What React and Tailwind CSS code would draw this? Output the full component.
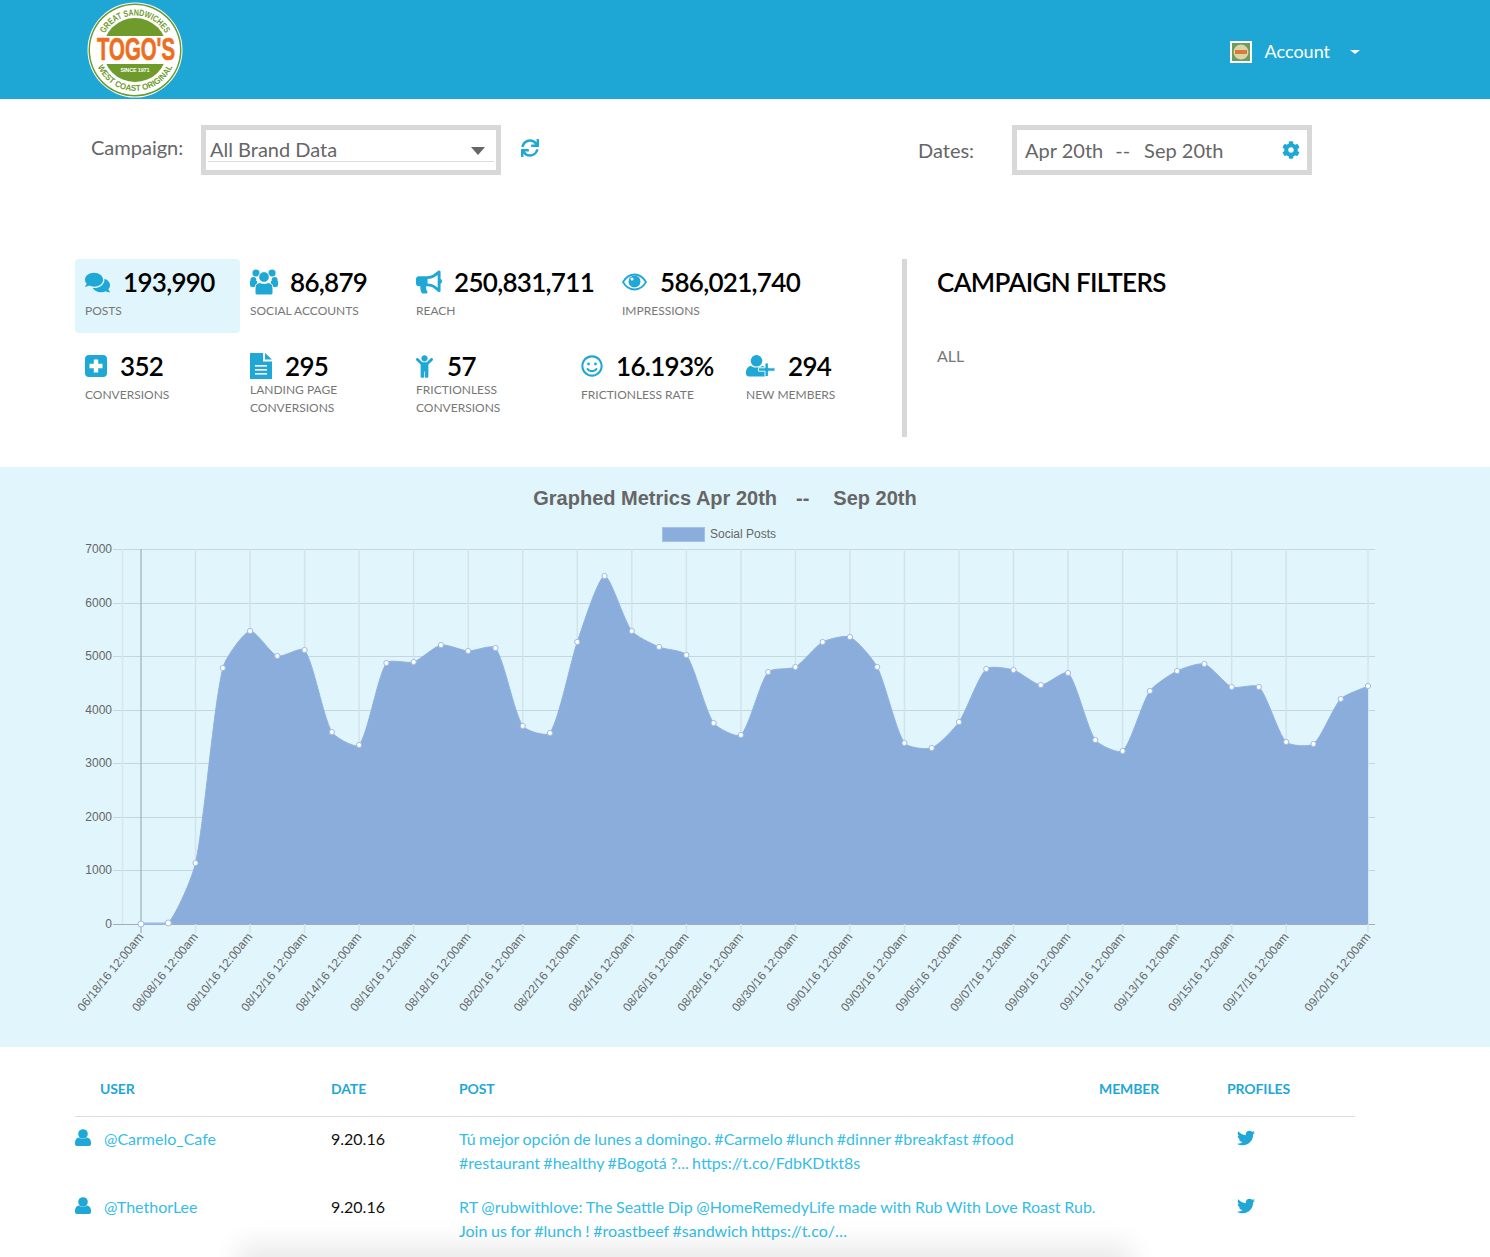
import React from "react";
import { FaComments, FaBullhorn, FaChild, FaRegSmile, FaSync, FaCog, FaTwitter } from "react-icons/fa";

const ys = [924,923,863,668,631,656,650,732,745,663,662,645,651,648,726,733,642,576,631,647,655,723,735,672,667,642,637,667,743,748,722,669,670,685,673,740,751,691,671,664,687,687,742,744,699,686];
const xAt = (i) => 141 + (i * (1368 - 141)) / 45;
const pts = ys.map((y, i) => [xAt(i) - 60, y - 530]);
const base = 924 - 530;

function curve() {
  const t = 0.22;
  const c = pts.map((p, i) => {
    const a = pts[Math.max(i - 1, 0)], b = pts[Math.min(i + 1, pts.length - 1)];
    const d1 = Math.hypot(p[0] - a[0], p[1] - a[1]), d2 = Math.hypot(b[0] - p[0], b[1] - p[1]);
    const s = d1 + d2 || 1;
    const fa = (t * d1) / s, fb = (t * d2) / s;
    return {
      p: [p[0] - fa * (b[0] - a[0]), Math.min(base, p[1] - fa * (b[1] - a[1]))],
      n: [p[0] + fb * (b[0] - a[0]), Math.min(base, p[1] + fb * (b[1] - a[1]))],
    };
  });
  let d = `M${pts[0][0]} ${pts[0][1]}`;
  for (let i = 1; i < pts.length; i++) d += `C${c[i - 1].n[0]} ${c[i - 1].n[1]} ${c[i].p[0]} ${c[i].p[1]} ${pts[i][0]} ${pts[i][1]}`;
  return d;
}

const labels = ["06/18/16","08/08/16","08/10/16","08/12/16","08/14/16","08/16/16","08/18/16","08/20/16","08/22/16","08/24/16","08/26/16","08/28/16","08/30/16","09/01/16","09/03/16","09/05/16","09/07/16","09/09/16","09/11/16","09/13/16","09/15/16","09/17/16","09/20/16"];

function Chart() {
  const line = curve();
  const hLines = [0,1,2,3,4,5,6,7];
  return (
    <svg width="1340" height="490" viewBox="0 0 1340 490" className="block" style={{ fontFamily: "'Liberation Sans', sans-serif" }}>
      {hLines.map((n) => {
        const y = Math.round(base - (n * 375) / 7) + 0.5;
        return (
          <g key={n}>
            <line x1="53" x2="1315" y1={y} y2={y} stroke={n === 0 ? "#a3aeb2" : "#c4d7de"} />
            <text x="52" y={y + 3} textAnchor="end" fontSize="12" fill="#666">{n === 0 ? "0" : n * 1000}</text>
          </g>
        );
      })}
      <line x1="62.5" x2="62.5" y1="19" y2={base} stroke="#d6e7ed" strokeWidth="1.5" />
      {labels.map((l, i) => {
        const xx = i === 22 ? 1308 : xAt(i * 2) - 60;
        return (
          <g key={i}>
            <line x1={xx} x2={xx} y1="19" y2={base + 9} stroke={i === 0 ? "#a9bdc5" : "#d2e4ea"} strokeWidth="1.5" />
            <text transform={`translate(${xx + 3} ${base + 13}) rotate(-51)`} textAnchor="end" fontSize="12" fill="#666">{l} 12:00am</text>
          </g>
        );
      })}
      <path d={`${line}L${pts[pts.length - 1][0]} ${base}L${pts[0][0]} ${base}Z`} fill="#8aaddc" />
      <path d={line} fill="none" stroke="#8fb1e0" strokeWidth="1" />
      <line x1={pts[0][0]} x2={pts[1][0]} y1={base - 0.5} y2={base - 0.5} stroke="#9dbbe8" strokeWidth="2" />
      {pts.map((p, i) => (
        <circle key={i} cx={p[0]} cy={p[1]} r={i < 2 ? 3 : 2.6} fill="#fff" stroke="#9dbbe8" strokeWidth="1" />
      ))}
    </svg>
  );
}

function Logo() {
  return (
    <svg width="96" height="96" viewBox="0 0 96 96" className="block" style={{ fontFamily: "'Liberation Sans', sans-serif" }}>
      <defs>
        <path id="logoTop" d="M13.5 48a34.5 34.5 0 0 1 69 0" />
        <path id="logoBottom" d="M7 48a41 41 0 0 0 82 0" />
      </defs>
      <circle cx="48" cy="48" r="47.5" fill="#fff" />
      <circle cx="48" cy="48" r="46.5" fill="#6b9a2e" />
      <circle cx="48" cy="48" r="45" fill="#fff" />
      <circle cx="48" cy="48" r="32" fill="#6f9b2c" />
      <text fontSize="9" fontWeight="700" fill="#6f9b2c"><textPath href="#logoTop" startOffset="50%" textAnchor="middle" textLength="74" lengthAdjust="spacingAndGlyphs">GREAT SANDWICHES</textPath></text>
      <text fontSize="8.5" fontWeight="700" fill="#6f9b2c"><textPath href="#logoBottom" startOffset="50%" textAnchor="middle" textLength="94" lengthAdjust="spacingAndGlyphs">WEST COAST ORIGINAL</textPath></text>
      <rect x="7" y="34" width="82" height="28" fill="#fff" />
      <text x="49" y="58" textAnchor="middle" fontSize="32" fontWeight="700" fill="#ec6f1f" stroke="#ec6f1f" strokeWidth="0.7" textLength="78" lengthAdjust="spacingAndGlyphs">TOGO'S</text>
      <text x="48" y="70" textAnchor="middle" fontSize="5.5" fontWeight="700" fill="#fff" textLength="29" lengthAdjust="spacing">SINCE 1971</text>
    </svg>
  );
}

const IconUsers = () => (
  <svg width="28" height="26" viewBox="0 0 28 26" fill="currentColor">
    <circle cx="6" cy="4" r="3.6" /><circle cx="22" cy="4" r="3.6" />
    <circle cx="3.4" cy="11" r="3" /><circle cx="24.6" cy="11" r="3" />
    <circle cx="14" cy="8" r="5.4" stroke="#fff" strokeWidth="1" />
    <path d="M0 12h7v6H2a2 2 0 0 1-2-2zM28 12h-7v6h5a2 2 0 0 0 2-2z" />
    <path d="M5 19c0-3.6 2.6-5.4 5-5.4 1.2 1 6.800 1 8 0 2.400 0 5 1.800 5 5.400v4.500c0 1.400-1 2.500-2.500 2.500h-13c-1.500 0-2.500-1.100-2.500-2.500z" stroke="#fff" strokeWidth="1" />
  </svg>
);
const IconEye = () => (
  <svg width="25" height="18" viewBox="0 0 25 18">
    <path d="M1 9c2.800-4.700 6.800-7.500 11.500-7.500S21.200 4.300 24 9c-2.800 4.700-6.800 7.500-11.500 7.500S3.800 13.700 1 9z" fill="none" stroke="currentColor" strokeWidth="1.800" />
    <circle cx="12.500" cy="8.500" r="6" fill="currentColor" />
    <circle cx="10" cy="6" r="1.500" fill="#fff" />
  </svg>
);
const IconPlus = () => (
  <svg width="22" height="22" viewBox="0 0 22 22">
    <rect width="22" height="22" rx="4" fill="currentColor" />
    <path d="M8.800 4.500h4.400v4.300h4.300v4.400h-4.300v4.300H8.800v-4.300H4.500V8.800h4.300z" fill="#fff" />
  </svg>
);
const IconFile = () => (
  <svg width="22" height="26" viewBox="0 0 22 26" fill="currentColor">
    <path d="M0 0h13v8.500h9V26H0z" />
    <path d="M15 0l7 6.500h-7z" />
    <rect x="5" y="12" width="12" height="1.600" fill="#fff" /><rect x="5" y="16" width="12" height="1.600" fill="#fff" /><rect x="5" y="20" width="12" height="1.600" fill="#fff" />
  </svg>
);
const IconUserPlus = () => (
  <svg width="29" height="22" viewBox="0 0 29 22">
    <circle cx="10.500" cy="5.800" r="5.800" fill="currentColor" />
    <path d="M0 17.500c0-4 2.600-6.500 5-6.500 2.500 2 8.500 2 11 0 2 0 4 1.500 4.500 4V21.500H3c-1.800 0-3-1.200-3-3z" fill="currentColor" />
    <path d="M19 8h3.400v4.800H29v3.400h-6.600V21.500H19v-5.300h-6.500v-3.400H19z" fill="currentColor" stroke="#fff" strokeWidth="0.9" />
  </svg>
);
const IconUser = () => (
  <svg width="16" height="17" viewBox="0 0 16 17" fill="currentColor">
    <circle cx="8" cy="5" r="4.800" />
    <path d="M0 13.500C0 10.500 2 9 3.800 8.600c2 1.800 6.400 1.800 8.400 0C14 9 16 10.500 16 13.500V15c0 1.200-.8 2-2 2H2c-1.200 0-2-.8-2-2z" />
  </svg>
);

function Stat({ icon, value, label, active, className, iconGap = "gap-[9px]", labelClass = "-mt-[3px]" }) {
  return (
    <div className={`pl-[10px] pr-[10px] ${active ? "bg-[#e1f5fc] rounded-[4px]" : ""} ${className}`}>
      <div className={`flex items-center h-[46px] ${iconGap}`}>
        <span className="text-[#1fa8d6] flex items-center">{icon}</span>
        <span className="text-[26px] font-semibold text-black tracking-[-0.7px] leading-none">{value}</span>
      </div>
      <div className={`text-[12px] leading-[18px] text-[#777] uppercase ${labelClass}`}>{label}</div>
    </div>
  );
}

const Row = ({ user, lines, spacing }) => (
  <div className="grid grid-cols-[256px_128px_640px_128px_1fr] text-[16px] leading-[24px] mb-[20px]">
    <div className="flex items-start">
      <span className="text-[#1fa8d6] mt-[2px]"><IconUser /></span>
      <a className="ml-[13px] text-[#35bde6]">{user}</a>
    </div>
    <div className="text-[#111]">9.20.16</div>
    <div className={`text-[#35bde6] whitespace-nowrap ${spacing}`}>{lines[0]}<br />{lines[1]}</div>
    <div />
    <div className="pl-[10px] pt-[2px]"><FaTwitter className="text-[#1fa8d6]" size={18} /></div>
  </div>
);

export default function App() {
  return (
    <div className="relative h-[1257px] overflow-hidden bg-white" style={{ fontFamily: "Lato, sans-serif" }}>
      <header className="h-[99px] bg-[#1ea7d5] flex items-center justify-between pl-[87px] pr-[130px]">
        <Logo />
        <div className="flex items-center mt-[4px] text-white">
          <svg width="22" height="22" viewBox="0 0 22 22" className="block">
            <rect width="22" height="22" fill="#fff" />
            <rect x="2" y="2" width="18" height="18" fill="#6f9b5c" />
            <circle cx="11" cy="11" r="7.500" fill="#d9d6a8" />
            <rect x="5" y="9" width="12" height="4" fill="#dc7a3a" />
          </svg>
          <span className="ml-[13px] mb-[2px] text-[18px] leading-[24px]">Account</span>
          <span className="ml-[20px] w-0 h-0 border-x-[5px] border-x-transparent border-t-[4px] border-t-white" />
        </div>
      </header>

      <div className="h-[160px] flex pt-[26px] pl-[91px] items-start">
        <span className="text-[20px] leading-[44px] text-[#666] w-[110px]">Campaign:</span>
        <div className="w-[300px] h-[50px] border-[5px] border-[#d8d8d8] px-[2px] pt-[2px]">
          <div className="h-[27px] border-b border-[#ddd] flex items-end justify-between pl-[2px] pr-[9px] text-[20px] leading-[26px] text-[#666] mt-[3px]">
            <span className="mb-[-1px]">All Brand Data</span>
            <span className="mb-[6px] w-0 h-0 border-x-[7px] border-x-transparent border-t-[8px] border-t-[#666]" />
          </div>
        </div>
        <FaSync className="text-[#1fa8d6] ml-[20px] mt-[14px]" size={18} />
        <span className="ml-[379px] text-[20px] leading-[50px] text-[#666] w-[94px]">Dates:</span>
        <div className="w-[300px] h-[50px] border-[5px] border-[#d8d8d8] pl-[8px] pr-[7px] flex items-center justify-between text-[20px] text-[#666]">
          <span className="whitespace-nowrap">Apr 20th<span className="ml-[12px]">--</span><span className="ml-[14px]">Sep 20th</span></span>
          <FaCog className="text-[#1fa8d6]" size={18} />
        </div>
      </div>

      <section className="flex pl-[75px] h-[208px]">
        <div className="w-[827px]">
          <div className="flex h-[84px]">
            <Stat active className="w-[165px] h-[74px]" iconGap="gap-[13px]" icon={<FaComments size={25} />} value="193,990" label="Posts" />
            <Stat className="w-[166px]" iconGap="gap-[12px]" icon={<IconUsers />} value="86,879" label="Social Accounts" />
            <Stat className="w-[206px]" iconGap="gap-[12px]" icon={<FaBullhorn size={26} />} value="250,831,711" label="Reach" />
            <Stat className="w-[220px]" iconGap="gap-[13px]" icon={<IconEye />} value="586,021,740" label="Impressions" />
          </div>
          <div className="flex">
            <Stat className="w-[165px]" icon={<IconPlus />} iconGap="gap-[13px]" value="352" label="Conversions" />
            <Stat className="w-[166px]" labelClass="-mt-[8px]" icon={<IconFile />} iconGap="gap-[13px]" value="295" label={<>Landing Page<br />Conversions</>} />
            <Stat className="w-[165px]" labelClass="-mt-[8px]" icon={<FaChild className="w-[17px] h-[23px]" />} iconGap="gap-[14px]" value="57" label={<>Frictionless<br />Conversions</>} />
            <Stat className="w-[165px]" icon={<FaRegSmile size={22} />} iconGap="gap-[13px]" value="16.193%" label="Frictionless Rate" />
            <Stat className="w-[166px]" icon={<IconUserPlus />} iconGap="gap-[13px]" value="294" label="New Members" />
          </div>
        </div>
        <div className="w-[5px] h-[178px] bg-[#d8d8d8]" />
        <div className="pl-[30px]">
          <h2 className="text-[26px] leading-[46px] font-semibold text-black tracking-[-0.65px]">CAMPAIGN FILTERS</h2>
          <p className="mt-[39px] text-[16px] leading-[24px] text-[#777]">ALL</p>
        </div>
      </section>

      <section className="h-[580px] bg-[#e1f5fc] relative">
        <div className="h-[63px] pt-[19px] pr-[40px] text-center text-[20px] leading-[24px] font-bold text-[#666] whitespace-nowrap" style={{ fontFamily: "'Liberation Sans', sans-serif" }}>
          Graphed Metrics Apr 20th<span className="ml-[19px]">--</span><span className="ml-[24px]">Sep 20th</span>
        </div>
        <div className="pl-[60px]"><Chart /></div>
        <div className="absolute left-[662px] top-[58px] flex items-center text-[12px] text-[#666]" style={{ fontFamily: "'Liberation Sans', sans-serif" }}>
          <span className="w-[43px] h-[15px] bg-[#8aaddc] border border-[#a3c0ea]" />
          <span className="ml-[5px]">Social Posts</span>
        </div>
      </section>

      <section className="mx-[75px] w-[1280px]">
        <div className="grid grid-cols-[256px_128px_640px_128px_1fr] h-[70px] items-center border-b border-[#ddd] text-[14px] font-bold text-[#1fa8d6] pt-[14px] tracking-[-0.1px]">
          <span className="pl-[25px]">USER</span><span>DATE</span><span>POST</span><span>MEMBER</span><span>PROFILES</span>
        </div>
        <div className="pt-[10px]">
          <Row user="@Carmelo_Cafe" spacing="[word-spacing:-0.7px]" lines={["Tú mejor opción de lunes a domingo. #Carmelo #lunch #dinner #breakfast #food", "#restaurant #healthy #Bogotá ?... https://t.co/FdbKDtkt8s"]} />
          <Row user="@ThethorLee" spacing="[word-spacing:-0.4px]" lines={["RT @rubwithlove: The Seattle Dip @HomeRemedyLife made with Rub With Love Roast Rub.", "Join us for #lunch ! #roastbeef #sandwich https://t.co/…"]} />
        </div>
      </section>

      <div className="absolute left-[250px] right-[370px] bottom-[-14px] h-[14px] shadow-[0_0_28px_12px_rgba(0,0,0,0.09)]" />
    </div>
  );
}
